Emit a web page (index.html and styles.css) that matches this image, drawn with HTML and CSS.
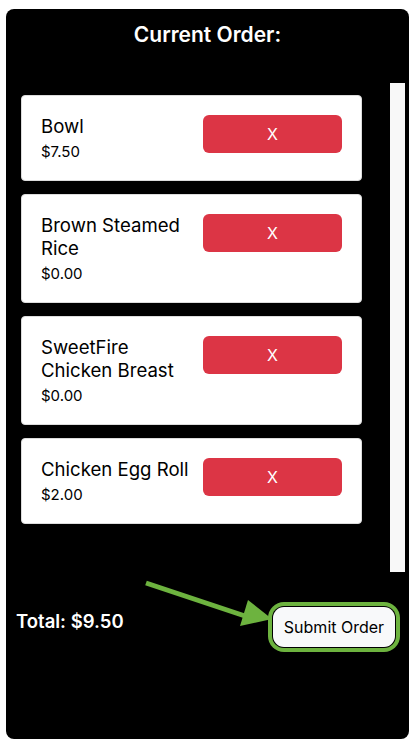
FILE: index.html
```html
<!DOCTYPE html>
<html lang="en">
<head>
<meta charset="utf-8">
<title>Current Order</title>
<link rel="stylesheet" href="styles.css">
</head>
<body>
<div class="panel">
  <h2 class="title">Current Order:</h2>
  <div class="list-row">
    <div class="list">
      <div class="card">
        <div class="info">
          <div class="name">Bowl</div>
          <div class="price">$7.50</div>
        </div>
        <button class="remove">X</button>
      </div>
      <div class="card">
        <div class="info">
          <div class="name">Brown Steamed Rice</div>
          <div class="price">$0.00</div>
        </div>
        <button class="remove">X</button>
      </div>
      <div class="card">
        <div class="info">
          <div class="name">SweetFire Chicken Breast</div>
          <div class="price">$0.00</div>
        </div>
        <button class="remove">X</button>
      </div>
      <div class="card">
        <div class="info">
          <div class="name">Chicken Egg Roll</div>
          <div class="price">$2.00</div>
        </div>
        <button class="remove">X</button>
      </div>
    </div>
    <div class="track"></div>
  </div>
  <div class="footer">
    <div class="total">Total: $9.50</div>
    <button class="submit">Submit Order</button>
  </div>
  <svg class="arrow" width="140" height="50" viewBox="0 0 140 50">
    <line x1="3" y1="3" x2="108" y2="38" stroke="#6db33f" stroke-width="5" stroke-linecap="butt"/>
    <polygon points="129,39 105,20 97,46" fill="#6db33f"/>
  </svg>
</div>
</body>
</html>
```
FILE: styles.css
```css
* { box-sizing: border-box; }
html, body { margin: 0; padding: 0; background: #fff; }
body {
  font-family: Inter, "Liberation Sans", sans-serif;
  width: 409px;
  height: 739px;
  overflow: hidden;
}
.panel {
  position: relative;
  margin: 9px 0 0 6px;
  width: 403px;
  height: 730px;
  background: #000;
  border-radius: 8px;
  padding-top: 14px;
  display: flex;
  flex-direction: column;
}
.title {
  margin: 0;
  color: #fff;
  font-size: 21px;
  font-weight: 600;
  line-height: 24px;
  text-align: center;
}
.list-row {
  margin: 36px 4px 0 15px;
  height: 489px;
  display: flex;
}
.list {
  flex: 1;
  padding: 12px 28px 0 0;
  display: flex;
  flex-direction: column;
  gap: 13px;
}
.track {
  width: 15px;
  background: #f8f8f8;
}
.card {
  background: #fff;
  border: 1px solid #dcdcdc;
  border-radius: 4px;
  padding: 19px 19px 19px 19px;
  display: grid;
  grid-template-columns: 1fr 139px;
  column-gap: 4px;
  align-items: start;
}
.name {
  font-size: 18.6px;
  line-height: 23px;
  color: #000;
  margin-bottom: 5px;
}
.price {
  font-size: 15px;
  line-height: 18px;
  color: #000;
}
.remove {
  height: 38px;
  background: #dc3545;
  color: #fff;
  border: none;
  border-radius: 6px;
  font-family: inherit;
  font-size: 16px;
  padding: 0;
}
.footer {
  margin-top: 35px;
  padding: 0 14px 0 10px;
  display: flex;
  justify-content: space-between;
  align-items: flex-start;
}
.total {
  color: #fff;
  font-size: 18.5px;
  font-weight: 600;
  line-height: 28px;
}
.submit {
  width: 122px;
  height: 40px;
  background: #f8f9fa;
  color: #000;
  border: none;
  border-radius: 11px;
  font-family: inherit;
  font-size: 16px;
  padding: 0;
  box-shadow: 0 0 0 1px #000, 0 0 0 5px #6db33f;
}
.arrow {
  position: absolute;
  left: 137px;
  top: 571px;
}
```
